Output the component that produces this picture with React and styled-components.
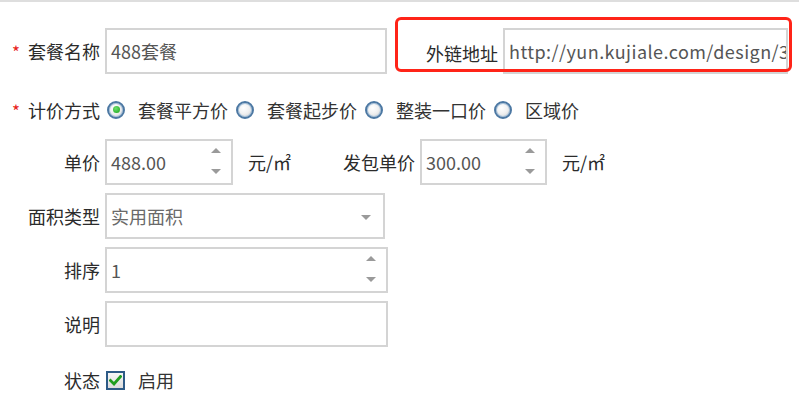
import styled, { createGlobalStyle } from "styled-components";

const GlobalStyle = createGlobalStyle`
  html, body {
    margin: 0;
    padding: 0;
    background: #fff;
  }
  body {
    font-family: "Noto Sans CJK SC", "Noto Sans", sans-serif;
    font-size: 18px;
    color: #333;
  }
`;

const Page = styled.div`
  border-top: 2px solid #dedede;
  padding: 26px 0 0 8px;
  box-sizing: border-box;
`;

const Form = styled.div`
  display: flex;
  flex-direction: column;
  gap: 8px;
`;

const Row = styled.div`
  display: flex;
  align-items: center;
  box-sizing: border-box;
  height: ${({ h }) => h || 46}px;
  padding-top: ${({ pt }) => pt || 0}px;
`;

const Label = styled.label`
  width: ${({ w }) => w || 92}px;
  margin-left: ${({ ml }) => ml || 0}px;
  margin-right: 5px;
  padding-top: ${({ drop }) => drop || 0}px;
  flex-shrink: 0;
  text-align: right;
  white-space: nowrap;
  color: #2b2b2b;
  line-height: 1;
`;

const Star = styled.span`
  color: #e8231a;
  margin-right: 8px;
  font-size: 17px;
`;

const FieldBox = styled.div`
  position: relative;
  width: ${({ w }) => w}px;
  height: 46px;
  box-sizing: border-box;
  border: 2px solid #d4d4d4;
  background: #fff;
  display: flex;
  align-items: center;
  padding-left: 4px;
  overflow: hidden;
  flex-shrink: 0;
`;

const Value = styled.span`
  color: ${({ muted }) => (muted ? "#6a6a6a" : "#555")};
  letter-spacing: ${({ wide }) => (wide ? "0.45px" : "0")};
  white-space: nowrap;
  line-height: 1;
`;

const Spinner = styled.div`
  position: absolute;
  top: 0;
  right: 0;
  bottom: -2px;
  width: 30px;
  background: #fff;
  border-bottom: 2px solid #e8e8e8;
  box-sizing: border-box;
  display: flex;
  flex-direction: column;
  align-items: center;
  justify-content: space-between;
  padding: 7px 0 9px;
`;

const Arrow = styled.span`
  width: 0;
  height: 0;
  border-left: 5px solid transparent;
  border-right: 5px solid transparent;
  ${({ up }) =>
    up ? "border-bottom: 5px solid #9a9a9a;" : "border-top: 5px solid #9a9a9a;"}
`;

const SelectArrow = styled(Arrow)`
  position: absolute;
  right: 12px;
  top: 20px;
`;

const Unit = styled.span`
  margin-left: 15px;
  white-space: nowrap;
  color: #2b2b2b;
  line-height: 1;
`;

const LinkField = styled.div`
  position: relative;
  display: flex;
  align-items: center;
  margin-left: 8px;
`;

const Highlight = styled.span`
  position: absolute;
  top: -11px;
  left: 0;
  right: -4px;
  bottom: 2px;
  border: 3px solid #ff2418;
  border-radius: 6px;
  pointer-events: none;
`;

const Options = styled.div`
  display: flex;
  align-items: center;
  margin-left: 2px;
`;

const Option = styled.span`
  display: inline-flex;
  align-items: center;
  gap: 13px;
  margin-right: 8px;
  margin-left: ${({ ml }) => ml || 0}px;
  line-height: 1;
  white-space: nowrap;
`;

const Radio = styled.span`
  width: 18px;
  height: 18px;
  box-sizing: border-box;
  border-radius: 50%;
  border: 2px solid #4c78a3;
  background: radial-gradient(circle at 40% 35%, #ffffff 0%, #f1f1f1 45%, #cfcfcf 100%);
  box-shadow: inset 0 0 0 1px #a9c3db;
  display: inline-flex;
  align-items: center;
  justify-content: center;

  &::after {
    content: "";
    display: ${({ checked }) => (checked ? "block" : "none")};
    width: 7px;
    height: 7px;
    border-radius: 50%;
    background: radial-gradient(circle at 40% 35%, #6fe06f, #17a317);
  }
`;

const Check = styled.span`
  width: 19px;
  height: 19px;
  box-sizing: border-box;
  border: 2px solid #2d5a86;
  background: linear-gradient(#f6f6f6, #dcdcdc);
  display: inline-flex;
  align-items: center;
  justify-content: center;
`;

function NumberField({ w, value }) {
  return (
    <FieldBox w={w}>
      <Value>{value}</Value>
      <Spinner>
        <Arrow up />
        <Arrow />
      </Spinner>
    </FieldBox>
  );
}

const methods = ["套餐平方价", "套餐起步价", "整装一口价", "区域价"];

export default function App() {
  return (
    <>
      <GlobalStyle />
      <Page>
        <Form>
          <Row>
            <Label>
              <Star>*</Star>套餐名称
            </Label>
            <FieldBox w={282}>
              <Value>488套餐</Value>
            </FieldBox>
            <LinkField>
              <Label w={103} drop={4}>外链地址</Label>
              <FieldBox w={285}>
                <Value wide>http://yun.kujiale.com/design/3FO4K4VQ8B2N</Value>
              </FieldBox>
              <Highlight />
            </LinkField>
          </Row>

          <Row h={49} pt={6}>
            <Label>
              <Star>*</Star>计价方式
            </Label>
            <Options>
              {methods.map((m, i) => (
                <Option key={m}>
                  <Radio checked={i === 0} />
                  {m}
                </Option>
              ))}
            </Options>
          </Row>

          <Row>
            <Label>单价</Label>
            <NumberField w={128} value="488.00" />
            <Unit>元/㎡</Unit>
            <Label w={77} ml={47}>发包单价</Label>
            <NumberField w={127} value="300.00" />
            <Unit>元/㎡</Unit>
          </Row>

          <Row>
            <Label>面积类型</Label>
            <FieldBox w={280}>
              <Value muted>实用面积</Value>
              <SelectArrow />
            </FieldBox>
          </Row>

          <Row>
            <Label>排序</Label>
            <NumberField w={283} value="1" />
          </Row>

          <Row>
            <Label>说明</Label>
            <FieldBox w={283} />
          </Row>

          <Row h={50}>
            <Label>状态</Label>
            <Option ml={1}>
              <Check>
                <svg width="13" height="11" viewBox="0 0 13 11">
                  <path
                    d="M1.5 5.5 L5 9 L11.5 1.5"
                    fill="none"
                    stroke="#1f9e1f"
                    strokeWidth="2.8"
                    strokeLinecap="square"
                  />
                </svg>
              </Check>
              启用
            </Option>
          </Row>
        </Form>
      </Page>
    </>
  );
}
